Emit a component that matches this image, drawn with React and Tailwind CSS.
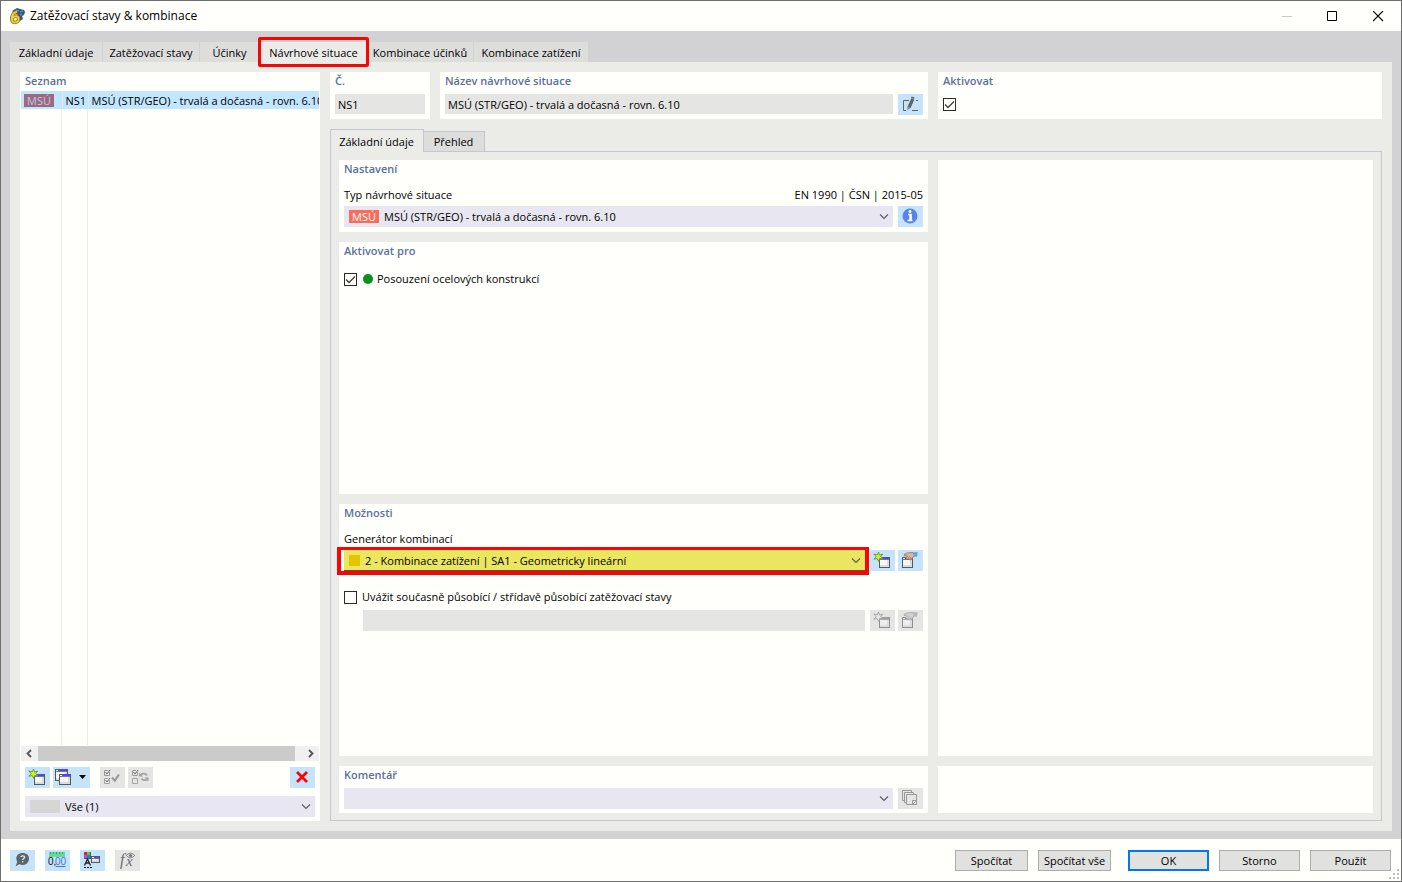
import React, { useState } from 'react';

const mainTabs = [
  { label: 'Základní údaje', width: 'w-[93px]' },
  { label: 'Zatěžovací stavy', width: 'w-[97px]' },
  { label: 'Účinky', width: 'w-[60px]' },
  { label: 'Návrhové situace', width: 'w-[107px]' },
  { label: 'Kombinace účinků', width: 'w-[107px]' },
  { label: 'Kombinace zatížení', width: 'w-[115px]' },
];

const situations = [
  { tag: 'MSÚ', id: 'NS1', name: 'MSÚ (STR/GEO) - trvalá a dočasná - rovn. 6.10' },
];

const Icon = ({ children, width = 25 }) => (
  <svg width={width} height="21" viewBox={`0 0 ${width} 21`} fill="none" aria-hidden="true">
    {children}
  </svg>
);

const LogoIcon = () => (
  <svg width="18" height="18" viewBox="0 0 18 18" fill="none" aria-hidden="true">
    <path d="M4 4l5-3 3 1 4 1 1 2-1 3-2 1 1 3-3 2-2-6-5-3z" fill="#3a5478" />
    <path d="M8 3l3 1M12 5l3-1M12 8l2-1" stroke="#6f9bd6" strokeWidth="1.300" />
    <path d="M9 4.500C6 5.500 3.800 8.500 3.800 11.800c0 2.400 1.300 3.700 3.200 3.700s3.600-1.500 3.600-3.400S9.500 9.300 7.900 9.300c-1.800 0-3.200 1-3.900 2.400" stroke="#7a6a14" strokeWidth="3.400" />
    <path d="M9 4.500C6 5.500 3.800 8.500 3.800 11.800c0 2.400 1.300 3.700 3.200 3.700s3.600-1.500 3.600-3.400S9.500 9.300 7.900 9.300c-1.800 0-3.200 1-3.900 2.400" stroke="#efcf38" strokeWidth="2" />
  </svg>
);

// small application window with a title strip, used by several toolbar icons
const MiniWindow = ({ x, y, w = 11, h = 11, disabled }) => (
  <>
    <rect x={x} y={y} width={w} height={h} fill={disabled ? '#8f8f8f' : '#55585c'} />
    <rect x={x + 1} y={y + 1} width={w - 2} height={h - 2} fill={disabled ? '#dedede' : '#dcdcdc'} />
    <rect x={x + 1} y={y + 3} width={w - 4} height={h - 6} fill={disabled ? '#eeeeee' : '#f6f6f6'} />
    <rect x={x + 1} y={y + 1} width="2" height="1" fill="#fff" />
    <rect x={x + 3} y={y} width={w - 4} height="2" fill={disabled ? '#9d9d9d' : '#4a4aec'} />
    <rect x={x + 1} y={y + 2} width={w - 2} height="1" fill={disabled ? '#a9a9a9' : '#77797c'} />
  </>
);

const NewIcon = ({ disabled }) => (
  <Icon>
    <MiniWindow x={9} y={7} disabled={disabled} />
    <path
      d="M8.500 2l1 3 3.300-.8-2.200 2.400 2.400 2-3.300-.1-1 3-1.500-2.900-3.400.6 2.400-2.500L3.800 4l3.500.8z"
      fill={disabled ? '#e8e8e8' : '#c8fa1e'}
      stroke={disabled ? '#a2a2a2' : '#6f8a4e'}
      strokeWidth="0.900"
    />
  </Icon>
);

const CopyIcon = () => (
  <Icon width={37}>
    <MiniWindow x={2} y={2} w={13} h={12} />
    <MiniWindow x={6} y={7} w={12} h={11} />
    <path d="M26 8h7l-3.500 4z" fill="#000" />
  </Icon>
);

const SmallBoxes = ({ second }) => (
  <>
    <path d="M9.500 5v3.500h-5v-5H8" stroke="#9a9a9a" />
    <path d="M5.500 5l1.500 2 3-4" stroke="#6f6f6f" />
    <path d={second ? 'M9.500 13v3.500h-5v-5H8' : 'M4.500 11.500h5v5h-5z'} stroke="#a5a5a5" />
    {second && <path d="M5.500 13l1.500 2 3-4" stroke="#6f6f6f" />}
  </>
);

const CheckAllIcon = () => (
  <Icon>
    <SmallBoxes second />
    <path d="M12 10.500l2.800 3.200L19 7.500" stroke="#9c9c9c" strokeWidth="2.200" />
  </Icon>
);

const InvertIcon = () => (
  <Icon>
    <SmallBoxes />
    <path d="M12.500 8c1.500-1.800 5-1.800 6.500.5M19.500 12c-1.500 1.800-4.500 1.500-6-.5" stroke="#a2a2a2" strokeWidth="1.800" />
    <path d="M11 5.500v4h4zM20.500 14.500v-4h-4z" fill="#a2a2a2" />
  </Icon>
);

const DeleteIcon = () => (
  <Icon>
    <path d="M7 5l10 10M17 5L7 15" stroke="#fa0505" strokeWidth="2.800" />
  </Icon>
);

const EditIcon = () => (
  <Icon>
    <path d="M11 6.500H5.500v10H8M14 16.500h6M18 6.500h2" stroke="#5c6468" />
    <path d="M11 13.500L14.800 5" stroke="#5c6468" strokeWidth="3.200" />
    <path d="M14.500 4.500l.6-1.500" stroke="#5c6468" strokeWidth="3.200" />
    <path d="M9.300 12.500l3 1.500-3 2.500z" fill="#8a9499" />
  </Icon>
);

const InfoIcon = () => (
  <Icon>
    <circle cx="12" cy="10" r="7.500" fill="#5882ee" />
    <path d="M10 8.500h3v5.500M9.500 14.500h5" stroke="#fff" strokeWidth="1.500" />
    <path d="M12.300 8.500v6" stroke="#fff" strokeWidth="2" />
    <circle cx="12" cy="5.500" r="1.400" fill="#fff" />
  </Icon>
);

const ModifyIcon = ({ disabled }) => (
  <Icon>
    <MiniWindow x={4} y={7} disabled={disabled} />
    <path
      d="M6 4.500L9 3l6-.5 2 2.500-2 2-1 2-2 1-1.500-1L8.500 9 8 7.500l1.500-1.500L6 5.500z"
      fill={disabled ? '#d2d2d2' : '#deb59c'}
      stroke={disabled ? '#a2a2a2' : '#8d6f62'}
      strokeWidth="0.800"
    />
    <path d="M10 8.500l1.500-2M12 9l1-2" stroke={disabled ? '#a2a2a2' : '#8d6f62'} strokeWidth="0.700" />
    <path d="M14.500 2.500l5-.5v3l-1 2-2.500-.500z" fill={disabled ? '#b8b8b8' : '#6d9fdc'} />
  </Icon>
);

const PagesIcon = () => (
  <Icon>
    <path d="M6.500 12.500h-2v-10h9v2" stroke="#999" />
    <path d="M8.500 14.500h-2v-10h9v2" stroke="#999" />
    <path d="M8.500 6.500h10v10h-10zM14.500 16v-3.500H18M14.500 16.500l3-3" stroke="#999" />
  </Icon>
);

const HelpIcon = () => (
  <Icon>
    <path d="M12.500 3c4 0 6.500 2.300 6.500 5.500S16.500 15 13 15c-1.500 0-2.600-.3-3.500-1L5.500 16.500 7.200 12C6.700 11 6.300 9.800 6.300 8.500 6.300 5.300 8.800 3 12.500 3z" fill="#5f6468" />
    <path d="M10.800 7c.2-1.400 3.800-1.600 3.800.3 0 1.300-1.900 1.300-1.900 2.700M12.700 11v1.500" stroke="#d5eafa" strokeWidth="1.300" />
  </Icon>
);

const UnitsIcon = () => (
  <Icon>
    <rect x="4" y="2" width="16" height="5" fill="#62dc93" />
    <path d="M5.500 2v2M8.500 2v2M11.500 2v2M14.500 2v2M17.500 2v2" stroke="#3aa968" />
    <text x="3" y="15" fontSize="10" fontFamily="Liberation Sans, sans-serif" fill="#111">0,</text>
    <text x="10" y="15" fontSize="10" fontFamily="Liberation Sans, sans-serif" fill="#4b72e0">00</text>
    <path d="M11 16.500h9.500" stroke="#4b72e0" />
  </Icon>
);

const DisplayIcon = () => (
  <Icon>
    <path d="M4 2h7v7H4z" fill="#50585c" />
    <rect x="4" y="2" width="3" height="3" fill="#f01c1c" />
    <rect x="7" y="2" width="3" height="3" fill="#3bdc1c" />
    <rect x="4" y="5" width="3" height="3" fill="#9d50ee" />
    <rect x="7" y="5" width="3" height="3" fill="#2f7ae8" />
    <MiniWindow x={11} y={6} w={9} h={7} />
    <path d="M4.500 15.500L7.500 9l3 6.500M6 13h3.500" stroke="#222" strokeWidth="1.300" />
    <path d="M4 17.500h2M7 17.500h2M10 17.500h2" stroke="#222" />
  </Icon>
);

const FormulaIcon = () => (
  <Icon>
    <text x="5" y="15" fontSize="16" fontStyle="italic" fontFamily="Liberation Serif, serif" fill="#6c6c6c">f</text>
    <text x="11" y="16" fontSize="15" fontStyle="italic" fontFamily="Liberation Serif, serif" fill="#6c6c6c">x</text>
    <path d="M11.500 5.500c2-3 6-3 8 0-2 3-6 3-8 0z" stroke="#777" />
    <circle cx="15.500" cy="5.500" r="1.600" fill="#777" />
  </Icon>
);

const Chevron = () => (
  <svg className="pointer-events-none shrink-0" width="10" height="6" viewBox="0 0 10 6" fill="none" aria-hidden="true">
    <path d="M1 .500l4 4 4-4" stroke="#5a5a5a" strokeWidth="1.100" />
  </svg>
);

const IconButton = ({ label, disabled, className = '', children }) => (
  <button
    type="button"
    aria-label={label}
    disabled={disabled}
    className={`shrink-0 h-[21px] ${disabled ? 'bg-[#e5e5e4]' : 'bg-[#c5e4fa]'} ${className}`}
  >
    {children}
  </button>
);

const Card = ({ title, className = '', children }) => (
  <section className={`bg-[#fffffb] px-[5px] min-w-0 ${className}`}>
    {title && <h2 className="font-semibold text-[#5a6f9d] leading-[17px] pb-px">{title}</h2>}
    {children}
  </section>
);

const Combo = ({ id, label, value, lead, className = '' }) => (
  <div className={`flex items-center h-[21px] pl-[5px] pr-1 min-w-0 flex-1 ${className}`}>
    {lead}
    <select id={id} aria-label={label} className="appearance-none bg-transparent flex-1 min-w-0 outline-none">
      <option>{value}</option>
    </select>
    <Chevron />
  </div>
);

const Checkbox = ({ id, label, checked, onChange }) => (
  <span className="relative block size-[13px] shrink-0">
    <input
      id={id}
      type="checkbox"
      aria-label={label}
      checked={checked}
      onChange={onChange}
      className="block appearance-none size-[13px] border border-[#2b2b2b] bg-[#fffffb]"
    />
    {checked && (
      <svg className="absolute inset-0 pointer-events-none" width="13" height="13" viewBox="0 0 13 13" fill="none" aria-hidden="true">
        <path d="M2 6.500l3 3 6-6" stroke="#3c3c3c" strokeWidth="1.300" />
      </svg>
    )}
  </span>
);

const SituationList = () => (
  <aside className="w-[300px] shrink-0 bg-[#fffffb] flex flex-col pb-1">
    <h2 className="font-semibold text-[#5a6f9d] leading-[17px] px-[5px] pb-[2px]">Seznam</h2>
    <div className="px-px overflow-hidden">
      <table className="w-full table-fixed border-collapse">
        <tbody>
          {situations.map((s) => (
            <tr key={s.id} className="h-[18px] bg-[#c3e6ff] whitespace-nowrap">
              <td className="w-[41px] p-0 pl-[3px] border-r border-[#dcebf3]">
                <span className="block w-[30px] h-[13px] leading-[13px] text-center bg-[#a0687f] text-[#a9cdf0]">{s.tag}</span>
              </td>
              <td className="w-[26px] p-0 pt-[2px] pl-[3px] border-r border-[#dcebf3]">{s.id}</td>
              <td className="p-0 pt-[2px] pl-[3px] overflow-hidden">{s.name}</td>
            </tr>
          ))}
        </tbody>
      </table>
    </div>
    <div className="flex flex-1 px-px">
      <div className="w-[41px] border-r border-[#ebebe8]" />
      <div className="w-[26px] border-r border-[#ebebe8]" />
    </div>
    <div className="flex items-center h-[15px] mx-px mt-px bg-[#f0f0f0]">
      <svg width="17" height="15" viewBox="0 0 17 15" fill="none" aria-hidden="true">
        <path d="M10 4L6.500 7.500 10 11" stroke="#555" strokeWidth="1.800" />
      </svg>
      <div className="flex-1 h-full bg-[#cbcbca]" />
      <svg width="24" height="15" viewBox="0 0 24 15" fill="none" aria-hidden="true">
        <path d="M14 4l3.500 3.500L14 11" stroke="#555" strokeWidth="1.800" />
      </svg>
    </div>
    <div className="flex mt-1.5 px-[5px]">
      <IconButton label="Nový"><NewIcon /></IconButton>
      <IconButton label="Kopírovat" className="ml-[3px]"><CopyIcon /></IconButton>
      <IconButton label="Vybrat vše" disabled className="ml-[10px]"><CheckAllIcon /></IconButton>
      <IconButton label="Obrátit výběr" disabled className="ml-[3px]"><InvertIcon /></IconButton>
      <IconButton label="Smazat" className="ml-auto"><DeleteIcon /></IconButton>
    </div>
    <div className="flex mt-2 px-[5px]">
      <Combo
        label="Filtr"
        value="Vše (1)"
        className="bg-[#e8e7f1]"
        lead={<span className="w-[30px] h-[13px] mr-[5px] bg-[#d6d6d5]" />}
      />
    </div>
  </aside>
);

const DialogButton = ({ primary, className, children }) => (
  <button
    type="button"
    className={`h-[21px] leading-[17px] bg-[#e1e1e0] whitespace-nowrap ${primary ? 'border-2 border-[#0078ee]' : 'border border-[#adadac] pt-px'} ${className}`}
  >
    {children}
  </button>
);

const App = () => {
  const [active, setActive] = useState(true);
  const [steel, setSteel] = useState(true);
  const [concurrent, setConcurrent] = useState(false);

  return (
    <div className="min-h-screen flex flex-col border border-[#6e6e6e] bg-[#fffffb] text-black font-['Open_Sans',sans-serif] text-[11px] leading-4">
      <header className="flex items-center h-[30px] pl-[7px] pr-[17px]">
        <LogoIcon />
        <h1 className="ml-1 text-[12px]">Zatěžovací stavy &amp; kombinace</h1>
        <div className="ml-auto flex items-center gap-[35px]">
          <button type="button" aria-label="Minimalizovat">
            <svg width="11" height="11" viewBox="0 0 11 11" fill="none"><path d="M1 5.500h10" stroke="#cacac6" /></svg>
          </button>
          <button type="button" aria-label="Maximalizovat">
            <svg width="11" height="11" viewBox="0 0 11 11" fill="none"><path d="M.5.500h9v9h-9z" stroke="#000" /></svg>
          </button>
          <button type="button" aria-label="Zavřít">
            <svg width="11" height="11" viewBox="0 0 11 11" fill="none"><path d="M0 0l10 10M10 0L0 10" stroke="#000" strokeWidth="1.100" /></svg>
          </button>
        </div>
      </header>

      <main className="flex-1 flex flex-col bg-[#d2d2d4] px-[9px] pt-[11px] pb-2">
        <nav className="flex h-5">
          {mainTabs.map((tab, i) => (
            <div key={tab.label} className={`relative ${tab.width}`}>
              <button
                type="button"
                className={`w-full h-full pt-[2px] text-center whitespace-nowrap ${i === 3 ? 'bg-[#ebece8]' : 'bg-[#dddddc] border-r border-[#d2d2d4]'}`}
              >
                {tab.label}
              </button>
              {i === 3 && <span className="absolute z-10 -inset-x-[2px] -inset-y-[5px] border-3 border-[#fa0505] rounded-xs pointer-events-none" />}
            </div>
          ))}
        </nav>

        <div className="flex-1 flex gap-[10px] bg-[#ebece8] p-[10px]">
          <SituationList />

          <div className="flex-1 min-w-0 flex flex-col">
            <div className="grid grid-cols-[100px_1fr_444px] gap-[10px] h-[47px]">
              <Card title={<label htmlFor="number">Č.</label>}>
                <input id="number" readOnly value="NS1" className="block w-full h-5 mt-1 px-[3px] bg-[#e5e5e4] outline-none" />
              </Card>
              <Card title={<label htmlFor="name">Název návrhové situace</label>}>
                <div className="flex gap-[5px] mt-1">
                  <input id="name" readOnly value={situations[0].name} className="flex-1 min-w-0 h-5 px-[3px] bg-[#e5e5e4] outline-none" />
                  <IconButton label="Upravit název"><EditIcon /></IconButton>
                </div>
              </Card>
              <Card title="Aktivovat">
                <div className="mt-2">
                  <Checkbox label="Aktivovat" checked={active} onChange={() => setActive(!active)} />
                </div>
              </Card>
            </div>

            <div className="relative flex items-end mt-[10px] h-[23px] -mb-px">
              <button type="button" className="w-[94px] h-[23px] pt-px pr-px border border-b-0 border-[#c6c6d0] bg-[#ebece8]">Základní údaje</button>
              <button type="button" className="w-[61px] h-[21px] pr-px border border-l-0 border-[#c6c6d0] bg-[#dddddc]">Přehled</button>
            </div>

            <div className="flex-1 grid grid-cols-[1fr_435px] gap-[10px] border border-[#c6c6d0] p-2 pb-[7px]">
              <div className="flex flex-col gap-[10px] min-w-0">
                <Card title="Nastavení" className="h-[72px]">
                  <div className="flex justify-between mt-[9px] leading-4">
                    <label htmlFor="type">Typ návrhové situace</label>
                    <span>EN 1990 | ČSN | 2015-05</span>
                  </div>
                  <div className="flex gap-[5px] mt-[3px]">
                    <Combo
                      id="type"
                      value={situations[0].name}
                      className="bg-[#e8e7f1]"
                      lead={<span className="w-[30px] h-[13px] leading-[13px] mr-[5px] text-center bg-[#fa6b5a] text-white">MSÚ</span>}
                    />
                    <IconButton label="Informace"><InfoIcon /></IconButton>
                  </div>
                </Card>

                <Card title="Aktivovat pro" className="flex-1">
                  <div className="flex items-center mt-[11px]">
                    <Checkbox id="steel" checked={steel} onChange={() => setSteel(!steel)} />
                    <span className="size-[10px] rounded-full bg-[#07911c] ml-1.5 mr-1" />
                    <label htmlFor="steel">Posouzení ocelových konstrukcí</label>
                  </div>
                </Card>

                <Card title="Možnosti" className="flex-1">
                  <label htmlFor="generator" className="block mt-[9px]">Generátor kombinací</label>
                  <div className="flex gap-[3px] mt-[3px]">
                    <div className="relative flex flex-1 min-w-0 mr-[2px]">
                      <Combo
                        id="generator"
                        value="2 - Kombinace zatížení | SA1 - Geometricky lineární"
                        className="bg-[#eae660] shadow-[inset_0_-1px_0_#55553a]"
                        lead={<span className="size-[11px] mr-[5px] bg-[#e3c400]" />}
                      />
                      <span className="absolute -left-[7px] -right-1 -top-[3px] -bottom-1 border-4 border-t-3 border-[#fa0505] pointer-events-none" />
                    </div>
                    <IconButton label="Nový generátor"><NewIcon /></IconButton>
                    <IconButton label="Upravit generátor"><ModifyIcon /></IconButton>
                  </div>
                  <div className="flex items-center mt-[18px]">
                    <Checkbox id="concurrent" checked={concurrent} onChange={() => setConcurrent(!concurrent)} />
                    <label htmlFor="concurrent" className="ml-[5px]">Uvážit současně působící / střídavě působící zatěžovací stavy</label>
                  </div>
                  <div className="flex gap-[3px] mt-[5px] pl-[19px]">
                    <input aria-label="Zatěžovací stavy" disabled className="flex-1 min-w-0 h-[21px] mr-[2px] bg-[#e5e5e4]" />
                    <IconButton label="Nový vztah" disabled><NewIcon disabled /></IconButton>
                    <IconButton label="Upravit vztah" disabled><ModifyIcon disabled /></IconButton>
                  </div>
                </Card>

                <Card title={<label htmlFor="comment">Komentář</label>} className="h-[47px]">
                  <div className="flex gap-[5px] mt-1">
                    <Combo id="comment" value="" className="bg-[#e8e7f1]" />
                    <IconButton label="Převzít komentář" disabled><PagesIcon /></IconButton>
                  </div>
                </Card>
              </div>

              <div className="flex flex-col gap-[10px]">
                <Card className="flex-1" />
                <Card className="h-[47px]" />
              </div>
            </div>
          </div>
        </div>
      </main>

      <footer className="relative flex items-center h-[42px] pl-[9px] pr-[10px]">
        <div className="flex gap-[10px]">
          <IconButton label="Nápověda"><HelpIcon /></IconButton>
          <IconButton label="Jednotky"><UnitsIcon /></IconButton>
          <IconButton label="Zobrazení"><DisplayIcon /></IconButton>
          <IconButton label="Vzorec" disabled><FormulaIcon /></IconButton>
        </div>
        <div className="ml-auto flex gap-[10px]">
          <DialogButton className="w-[73px]">Spočítat</DialogButton>
          <DialogButton className="w-[73px]">Spočítat vše</DialogButton>
          <DialogButton primary className="w-[81px] ml-[7px]">OK</DialogButton>
          <DialogButton className="w-[81px]">Storno</DialogButton>
          <DialogButton className="w-[81px]">Použít</DialogButton>
        </div>
        <svg className="absolute right-px bottom-px" width="11" height="11" viewBox="0 0 11 11" fill="#bdbdba" aria-hidden="true">
          <path d="M8 0h2v2H8zM8 4h2v2H8zM8 8h2v2H8zM4 4h2v2H4zM4 8h2v2H4zM0 8h2v2H0z" />
        </svg>
      </footer>
    </div>
  );
};

export default App;
